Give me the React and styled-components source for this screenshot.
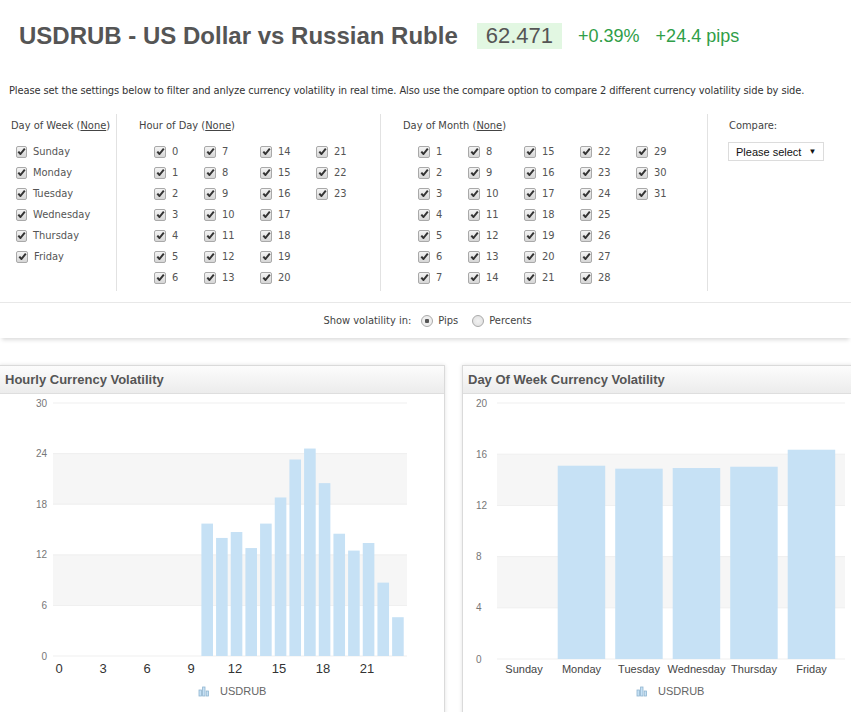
import { createGlobalStyle, styled } from 'styled-components';

const GlobalStyle = createGlobalStyle`
  html, body {
    margin: 0;
    padding: 0;
    background: #fff;
    overflow: hidden;
  }
  body {
    font-family: 'Liberation Sans', Arial, sans-serif;
    color: #444;
  }
`;

const condensed = `'Liberation Sans Narrow', 'DejaVu Sans Condensed', 'DejaVu Sans', sans-serif`;
const tahoma = `'DejaVu Sans Condensed', 'DejaVu Sans', sans-serif`;

const weekDays = ['Sunday', 'Monday', 'Tuesday', 'Wednesday', 'Thursday', 'Friday'];
const hours = Array.from({ length: 24 }, (_, i) => i);
const monthDays = Array.from({ length: 31 }, (_, i) => i + 1);

const hourly = { 10: 15.7, 11: 14.0, 12: 14.7, 13: 12.8, 14: 15.7, 15: 18.8, 16: 23.3, 17: 24.6, 18: 20.5, 19: 14.5, 20: 12.5, 21: 13.4, 22: 8.7, 23: 4.6 };
const weekly = [0, 15.1, 14.87, 14.92, 15.02, 16.35];

const Header = styled.header`
  display: flex;
  align-items: center;
  padding: 22px 0 0 19px;
  height: 28px;
`;

const Title = styled.h1`
  margin: 0 19px 0 0;
  font-size: 24px;
  font-weight: bold;
  color: #555;
`;

const Price = styled.span`
  background: #e2f7e2;
  color: #555;
  font-size: 22px;
  line-height: 26px;
  padding: 0 9px;
  margin-right: 16px;
`;

const Change = styled.span`
  color: #2f9e48;
  font-size: 18px;
  margin-right: 16px;
`;

const Intro = styled.p`
  margin: 34px 0 0 9px;
  font-family: ${condensed};
  font-size: 11px;
  letter-spacing: -0.1px;
  color: #333;
  white-space: nowrap;
`;

const Settings = styled.section`
  margin-top: 14px;
  background: #fff;
  box-shadow: 0 4px 4px -2px rgba(0, 0, 0, 0.14);
`;

const FiltersRow = styled.div`
  display: flex;
  padding: 3px 0 11px;
`;

const Column = styled.div`
  box-sizing: border-box;
  height: 177px;
  width: ${(p) => p.$width}px;
  padding: 5px 0 0 ${(p) => p.$pad}px;
  border-left: ${(p) => (p.$first ? 'none' : '1px solid #e2e2e2')};
`;

const Heading = styled.div`
  font-family: ${tahoma};
  font-size: 11px;
  line-height: 14px;
  color: #444;

  u {
    text-decoration: underline;
  }
`;

const CheckGrid = styled.div`
  display: grid;
  grid-auto-flow: column;
  grid-template-rows: repeat(7, 21px);
  grid-template-columns: 50px repeat(4, 56px);
  margin: 8px 0 0 ${(p) => p.$indent}px;
`;

const CheckItem = styled.label`
  display: flex;
  align-items: center;
  gap: 6px;
  font-family: ${tahoma};
  font-size: 11px;
  color: #555;
  white-space: nowrap;
`;

const Box = styled.span`
  box-sizing: border-box;
  width: 12px;
  height: 12px;
  border: 1px solid #a9a9a9;
  border-radius: 2px;
  background: linear-gradient(#f4f4f4, #d6d6d6);
  display: flex;
  align-items: center;
  justify-content: center;
`;

const Select = styled.div`
  display: inline-flex;
  align-items: center;
  gap: 7px;
  margin: 9px 0 0 -1px;
  height: 19px;
  box-sizing: border-box;
  padding: 0 7px;
  border: 1px solid #dcdcdc;
  font-size: 11px;
  color: #111;

  span {
    font-size: 8px;
  }
`;

const VolRow = styled.div`
  display: flex;
  align-items: center;
  justify-content: center;
  height: 35px;
  border-top: 1px solid #e8e8e8;
  font-family: ${condensed};
  font-size: 11px;
  color: #444;
  padding-left: 4px;
`;

const RadioItem = styled.label`
  display: flex;
  align-items: center;
  gap: 5px;
  margin-left: ${(p) => p.$gap}px;
`;

const Radio = styled.span`
  box-sizing: border-box;
  width: 12px;
  height: 12px;
  border-radius: 50%;
  border: 1px solid #aaa;
  background: radial-gradient(circle, ${(p) => (p.$on ? '#555 0 2px, #eee 2.5px' : '#f2f2f2 0, #ddd 100%')});
`;

const Charts = styled.div`
  display: grid;
  grid-template-columns: 446px 400px;
  column-gap: 17px;
  margin: 27px 0 0 -1px;
`;

const Panel = styled.div`
  border: 1px solid #dadada;
  box-shadow: 0 0 4px rgba(0, 0, 0, 0.12);
  height: 360px;
  background: #fff;
`;

const PanelHead = styled.div`
  height: 27px;
  line-height: 27px;
  padding-left: 5px;
  background: linear-gradient(#fcfcfc, #ececec);
  border-bottom: 1px solid #dedede;
  font-size: 13px;
  font-weight: bold;
  color: #555;
`;

const ChartSvg = styled.svg`
  display: block;
  font-family: 'Liberation Sans', Arial, sans-serif;
`;

function Check() {
  return (
    <Box>
      <svg width="9" height="9" viewBox="0 0 9 9">
        <path d="M1.3 4.6 L3.5 7 L7.8 1.6" fill="none" stroke="#333" strokeWidth="2" strokeLinejoin="round" />
      </svg>
    </Box>
  );
}

function Checks({ items, indent }) {
  return (
    <CheckGrid $indent={indent}>
      {items.map((it) => (
        <CheckItem key={it}>
          <Check />
          {it}
        </CheckItem>
      ))}
    </CheckGrid>
  );
}

function LegendIcon({ x, y }) {
  return (
    <g fill="#c6e1f5" stroke="#8fb4cf" strokeWidth="0.8">
      <rect x={x} y={y + 3} width="2.4" height="6" />
      <rect x={x + 3.6} y={y} width="2.4" height="9" />
      <rect x={x + 7.2} y={y + 4} width="2.4" height="5" />
    </g>
  );
}

function HourlyChart() {
  const base = 262;
  const k = 8.433;
  const y = (v) => base - v * k;
  return (
    <ChartSvg width="445" height="330">
      <rect x="53" y={y(24)} width="354" height={6 * k} fill="#f6f6f6" />
      <rect x="53" y={y(12)} width="354" height={6 * k} fill="#f6f6f6" />
      {[0, 6, 12, 18, 24, 30].map((v) => (
        <g key={v}>
          <line x1="53" x2="407" y1={y(v)} y2={y(v)} stroke="#efefef" />
          <text x="47" y={y(v) + 3.5} fontSize="10" fill="#777" textAnchor="end">{v}</text>
        </g>
      ))}
      {Object.entries(hourly).map(([h, v]) => (
        <rect key={h} x={60.5 + h * 14.67 - 5.8} y={y(v)} width="11.6" height={v * k} fill="#c6e1f5" />
      ))}
      {[0, 3, 6, 9, 12, 15, 18, 21].map((h) => (
        <text key={h} x={59 + h * 14.67} y="279" fontSize="13" fill="#333" textAnchor="middle">{h}</text>
      ))}
      <LegendIcon x={199} y={293} />
      <text x="220" y="301" fontSize="11" fill="#666">USDRUB</text>
    </ChartSvg>
  );
}

function WeeklyChart() {
  const base = 265;
  const k = 12.8;
  const y = (v) => base - v * k;
  return (
    <ChartSvg width="400" height="330">
      <rect x="34" y={y(16)} width="348" height={4 * k} fill="#f6f6f6" />
      <rect x="34" y={y(8)} width="348" height={4 * k} fill="#f6f6f6" />
      {[0, 4, 8, 12, 16, 20].map((v) => (
        <g key={v}>
          <line x1="34" x2="382" y1={y(v)} y2={y(v)} stroke="#efefef" />
          <text x="13" y={y(v) + 3.5} fontSize="10" fill="#777">{v}</text>
        </g>
      ))}
      {weekly.map((v, i) => (
        <g key={i}>
          <rect x={37.2 + i * 57.5} y={y(v)} width="47.5" height={v * k} fill="#c6e1f5" />
          <text x={61 + i * 57.5} y="279" fontSize="11" fill="#444" textAnchor="middle">{weekDays[i]}</text>
        </g>
      ))}
      <LegendIcon x={174} y={293} />
      <text x="195" y="301" fontSize="11" fill="#666">USDRUB</text>
    </ChartSvg>
  );
}

export default function App() {
  return (
    <>
      <GlobalStyle />
      <Header>
        <Title>USDRUB - US Dollar vs Russian Ruble</Title>
        <Price>62.471</Price>
        <Change>+0.39%</Change>
        <Change>+24.4 pips</Change>
      </Header>
      <Intro>
        Please set the settings below to filter and anlyze currency volatility in real time. Also use the compare option to compare 2 different currency volatility side by side.
      </Intro>
      <Settings>
        <FiltersRow>
          <Column $first $width={116} $pad={11}>
            <Heading>Day of Week (<u>None</u>)</Heading>
            <Checks items={weekDays} indent={5} />
          </Column>
          <Column $width={264} $pad={22}>
            <Heading>Hour of Day (<u>None</u>)</Heading>
            <Checks items={hours} indent={15} />
          </Column>
          <Column $width={327} $pad={22}>
            <Heading>Day of Month (<u>None</u>)</Heading>
            <Checks items={monthDays} indent={15} />
          </Column>
          <Column $width={144} $pad={21}>
            <Heading>Compare:</Heading>
            <Select>
              Please select <span>▼</span>
            </Select>
          </Column>
        </FiltersRow>
        <VolRow>
          Show volatility in:
          <RadioItem $gap={10}>
            <Radio $on />
            Pips
          </RadioItem>
          <RadioItem $gap={14}>
            <Radio />
            Percents
          </RadioItem>
        </VolRow>
      </Settings>
      <Charts>
        <Panel>
          <PanelHead>Hourly Currency Volatility</PanelHead>
          <HourlyChart />
        </Panel>
        <Panel>
          <PanelHead>Day Of Week Currency Volatility</PanelHead>
          <WeeklyChart />
        </Panel>
      </Charts>
    </>
  );
}
